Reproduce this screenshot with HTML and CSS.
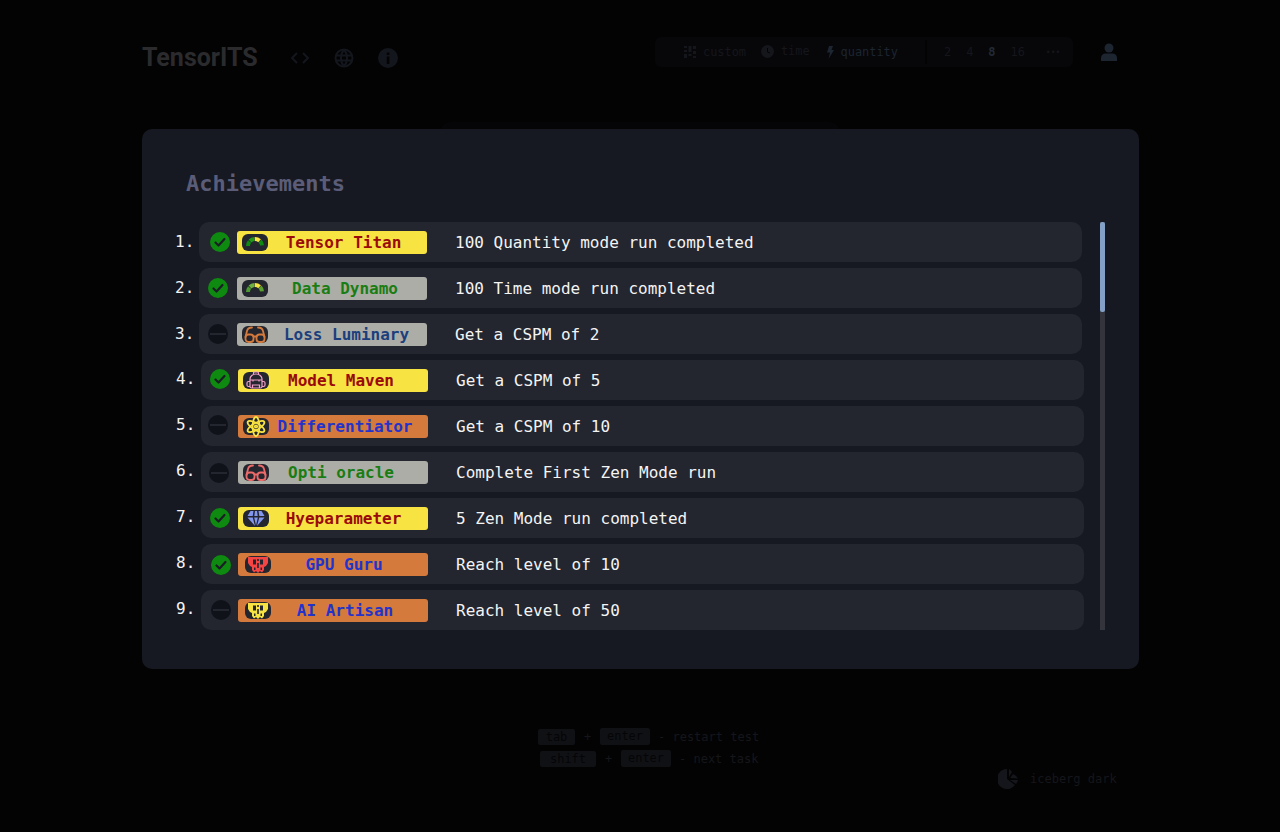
FILE: index.html
```html
<!DOCTYPE html>
<html>
  <head>
    <meta charset="UTF-8">
    <title>TensorITS</title>
    <link rel="stylesheet" href="styles.css">
  </head>
  <body>

    <svg class="defs" width="0" height="0">
      <symbol id="gauge" viewBox="0 0 26 17">
        <g fill="none" stroke-width="4" transform="translate(0 -1)">
          <path class="g1" d="M6 13A7 7 0 0 1 7.6 8.5"/>
          <path class="g2" d="M8 8A7 7 0 0 1 12.4 6"/>
          <path class="g3" d="M12.800 6A7 7 0 0 1 17.600 7.700"/>
          <path class="g4" d="M18 8A7 7 0 0 1 20 12.400"/>
        </g>
      </symbol>
      <symbol id="glasses" viewBox="0 0 26 17">
        <g fill="none" stroke="currentColor" stroke-width="1.8" stroke-linecap="round">
          <rect x="3.5" y="8.5" width="8" height="7.5" rx="3"/>
          <rect x="14.5" y="8.5" width="8" height="7.5" rx="3"/>
          <path d="M11.5 10.5h3M3.5 11L5 5C5.6 2.6 7 1.5 10 1.5M22.5 11L21 5C20.4 2.6 19 1.5 16 1.5"/>
        </g>
      </symbol>
      <symbol id="backpack" viewBox="0 0 26 17">
        <g fill="none" stroke="currentColor" stroke-width="1.2">
          <path d="M7 14.500V7a6 5 0 0 1 12 0v7.500a1.500 1.500 0 0 1-1.500 1.500h-9A1.500 1.500 0 0 1 7 14.500z"/>
          <path d="M10.500 2.500V1a1 1 0 0 1 1-1h3a1 1 0 0 1 1 1v1.500M7 8h12M10 8v1.500M16 8v1.500M9.500 16v-3h7v3M7 9.500H5.500A1.500 1.500 0 0 0 4 11v2a1.500 1.500 0 0 0 1.500 1.500H7M19 9.500h1.500A1.500 1.500 0 0 1 22 11v2a1.500 1.500 0 0 1-1.500 1.500H19"/>
        </g>
      </symbol>
      <symbol id="atom" viewBox="0 0 26 17">
        <g fill="none" stroke="currentColor" stroke-width="1.8">
          <ellipse cx="13" cy="8.5" rx="3.4" ry="9.5"/>
          <ellipse cx="13" cy="8.5" rx="3.4" ry="9.5" transform="rotate(60 13 8.5)"/>
          <ellipse cx="13" cy="8.5" rx="3.4" ry="9.5" transform="rotate(120 13 8.5)"/>
          <circle cx="13" cy="8.5" r="1.2"/>
        </g>
      </symbol>
      <symbol id="diamond" viewBox="0 0 26 17">
        <path fill="currentColor" d="M7.500 1h3l-.800 5H4.500zM12 1h2l.700 5h-3.400zM15.500 1h3l3 5h-5.200zM4.500 7.500h5.200l2.300 8.500zM11.200 7.500h3.600L13 15.500zM16.300 7.500h5.200L14 16z"/>
      </symbol>
      <symbol id="skull" viewBox="0 0 26 17">
        <path fill="currentColor" fill-rule="evenodd" d="M3 1h20v6l-2 3-2 1v3l-2 2.500-2-1.500-2 2-2-2-2 1.500L7 14v-3L5 10 3 7zM8 3.500v5h3v-5zM15 3.500v5h3v-5zM12.200 3v2h1.600V3zM12.200 7v5h1.600V7zM9 11.500V14h1.500v-2.500zM15.500 11.500V14H17v-2.500z"/>
      </symbol>
      <symbol id="tick" viewBox="0 0 20 20">
        <path fill="none" stroke="currentColor" stroke-width="2.2" stroke-linecap="round" stroke-linejoin="round" d="M5.500 10.500l3 3 6-6.500"/>
      </symbol>
    </svg>

    <div class="page">
      <header class="header">
        <div class="logo">TensorITS</div>
        <nav class="nav">
          <svg width="20" height="14" viewBox="0 0 20 14"><path fill="none" stroke="currentColor" stroke-width="2" d="M7 2L2 7l5 5M13 2l5 5-5 5"/></svg>
          <svg width="20" height="20" viewBox="0 0 20 20"><g fill="none" stroke="currentColor" stroke-width="2"><circle cx="10" cy="10" r="8.500"/><path d="M1.500 7.500h17M1.500 12.500h17M10 1.500C6 6 6 14 10 18.500M10 1.500c4 4.500 4 12.500 0 17"/></g></svg>
          <svg width="20" height="20" viewBox="0 0 20 20"><circle cx="10" cy="10" r="10" fill="currentColor"/><path fill="#030304" d="M8.800 8.500h2.600V16H8.800zM8.800 4.500h2.600v2.600H8.800z"/></svg>
        </nav>
        <div class="toolbar">
          <div class="modes">
            <span class="mode">
              <svg width="12" height="13" viewBox="0 0 12 13"><path fill="currentColor" d="M0 0h3v2H0zM0 4h3v2H0zM0 8h3v4H0zM4.500 0h3v6h-3zM4.500 8h3v2h-3zM9 0h3v3H9zM9 5h3v3H9zM9 10h3v2H9z"/></svg>
              custom
            </span>
            <span class="mode mode-time">
              <svg width="13" height="13" viewBox="0 0 13 13"><circle cx="6.500" cy="6.500" r="6.500" fill="currentColor"/><path fill="none" stroke="#030304" d="M6.500 3v4l2.500 1"/></svg>
              time
            </span>
            <span class="mode mode-active">
              <svg width="7" height="13" viewBox="0 0 7 13"><path fill="currentColor" d="M2 0h4L4.500 4H7L1.500 13 3 6.500H0z"/></svg>
              quantity
            </span>
          </div>
          <div class="counts">
            <span>2</span>
            <span>4</span>
            <span class="count-active">8</span>
            <span>16</span>
            <span class="count-more">•••</span>
          </div>
        </div>
        <svg class="user" width="16" height="18" viewBox="0 0 16 18"><circle cx="8" cy="5" r="4.500" fill="currentColor"/><path fill="currentColor" d="M0 18v-3c0-3 2-4.500 4.500-4.500h7C14 10.500 16 12 16 15v3z"/></svg>
      </header>

      <div class="task-box"></div>

      <footer class="footer">
        <div class="hints">
          <div class="hint"><kbd>tab</kbd><i>+</i><kbd class="kbd-enter">enter</kbd><span>- restart test</span></div>
          <div class="hint hint-second"><kbd class="kbd-shift">shift</kbd><i>+</i><kbd class="kbd-enter">enter</kbd><span>- next task</span></div>
        </div>
        <div class="theme">
          <svg width="20" height="20" viewBox="0 0 20 20"><path fill="currentColor" d="M9 0a10 10 0 1 0 8 16l-8-6zM11 0v8l3-5a10 10 0 0 0-3-3zM15 5l-3 4 8 .500A10 10 0 0 0 15 5zM12 11l6 4a10 10 0 0 0 2-4z"/></svg>
          iceberg dark
        </div>
      </footer>
    </div>

    <div class="overlay">
      <section class="modal">
        <h2 class="modal-title">Achievements</h2>
        <div class="modal-body">
          <ol class="list">
            <li class="item">
              <span class="num">1.</span>
              <div class="row">
                <span class="status done"><svg width="20" height="20"><use href="#tick"/></svg></span>
                <span class="badge gold"><svg class="icon gauge-bright"><use href="#gauge"/></svg><b>Tensor Titan</b></span>
                <span class="desc">100 Quantity mode run completed</span>
              </div>
            </li>
            <li class="item">
              <span class="num">2.</span>
              <div class="row">
                <span class="status done"><svg width="20" height="20"><use href="#tick"/></svg></span>
                <span class="badge silver"><svg class="icon gauge-soft"><use href="#gauge"/></svg><b class="green">Data Dynamo</b></span>
                <span class="desc">100 Time mode run completed</span>
              </div>
            </li>
            <li class="item">
              <span class="num">3.</span>
              <div class="row">
                <span class="status"></span>
                <span class="badge silver"><svg class="icon orange"><use href="#glasses"/></svg><b class="navy">Loss Luminary</b></span>
                <span class="desc">Get a CSPM of 2</span>
              </div>
            </li>
            <li class="item">
              <span class="num">4.</span>
              <div class="row">
                <span class="status done"><svg width="20" height="20"><use href="#tick"/></svg></span>
                <span class="badge gold"><svg class="icon pink"><use href="#backpack"/></svg><b>Model Maven</b></span>
                <span class="desc">Get a CSPM of 5</span>
              </div>
            </li>
            <li class="item">
              <span class="num">5.</span>
              <div class="row">
                <span class="status"></span>
                <span class="badge bronze"><svg class="icon yellow"><use href="#atom"/></svg><b class="blue">Differentiator</b></span>
                <span class="desc">Get a CSPM of 10</span>
              </div>
            </li>
            <li class="item">
              <span class="num">6.</span>
              <div class="row">
                <span class="status"></span>
                <span class="badge silver"><svg class="icon coral"><use href="#glasses"/></svg><b class="green">Opti oracle</b></span>
                <span class="desc">Complete First Zen Mode run</span>
              </div>
            </li>
            <li class="item">
              <span class="num">7.</span>
              <div class="row">
                <span class="status done"><svg width="20" height="20"><use href="#tick"/></svg></span>
                <span class="badge gold"><svg class="icon periwinkle"><use href="#diamond"/></svg><b>Hyeparameter</b></span>
                <span class="desc">5 Zen Mode run completed</span>
              </div>
            </li>
            <li class="item">
              <span class="num">8.</span>
              <div class="row">
                <span class="status done"><svg width="20" height="20"><use href="#tick"/></svg></span>
                <span class="badge bronze"><svg class="icon red skull"><use href="#skull"/></svg><b class="blue">GPU Guru</b></span>
                <span class="desc">Reach level of 10</span>
              </div>
            </li>
            <li class="item">
              <span class="num">9.</span>
              <div class="row">
                <span class="status"></span>
                <span class="badge bronze"><svg class="icon yellow skull"><use href="#skull"/></svg><b class="blue">AI Artisan</b></span>
                <span class="desc">Reach level of 50</span>
              </div>
            </li>
          </ol>
          <div class="scrollbar"><div class="scrollbar-thumb"></div></div>
        </div>
      </section>
    </div>

  </body>
</html>
```

FILE: styles.css
```css
* {
  box-sizing: border-box;
  margin: 0;
  padding: 0;
}

html, body {
  height: 100%;
}

body {
  background: #030304;
  font-family: "DejaVu Sans Mono", "Liberation Mono", monospace;
  overflow: hidden;
}

.defs { display: block; }
symbol { overflow: visible; }

/* page behind the dialog, already dimmed */
.page {
  height: 832px;
  padding: 0 141px 0 142px;
  color: #15161b;
}

.header {
  display: flex;
  align-items: flex-start;
  padding-top: 37px;
  height: 85px;
}

.logo {
  font-family: Roboto, sans-serif;
  font-weight: 700;
  font-size: 25px;
  line-height: 30px;
  margin-top: 6px;
  width: 115px;
  color: #2b2b2d;
}

.nav {
  display: flex;
  align-items: center;
  gap: 24px;
  margin: 11px 0 0 33px;
  color: #14161d;
}

.toolbar {
  display: flex;
  align-items: center;
  width: 418px;
  height: 30px;
  margin-left: 257px;
  border-radius: 6px;
  background: #07070a;
  font-size: 11.9px;
}

.modes {
  display: flex;
  width: 272px;
  height: 24px;
  padding-left: 29px;
  gap: 15px;
  align-items: center;
  border-right: 2px solid #030304;
}

.mode {
  display: flex;
  align-items: center;
  gap: 7px;
}

.mode-time { margin-bottom: 2px; }
.mode-active { color: #1c2530; margin-left: 2px; }

.counts {
  display: flex;
  gap: 15px;
  padding-left: 17px;
}

.count-active { color: #222a35; font-weight: 700; }
.count-more { margin-left: 6px; font-size: 8px; line-height: 15px; }

.user {
  margin: 6px 0 0 28px;
  color: #1c2530;
}

.task-box {
  width: 400px;
  height: 100px;
  margin: 37px 0 0 298px;
  border-radius: 10px;
  background: #050507;
}

.footer {
  display: flex;
  flex-direction: column;
  margin-top: 506px;
  font-size: 12px;
}

.hints {
  display: flex;
  flex-direction: column;
  gap: 5px;
  width: 240px;
  margin-left: 396px;
}

.hint {
  display: flex;
  align-items: center;
  height: 17px;
}

.hint-second { margin-left: 2px; }
.hint i { font-style: normal; width: 25px; text-align: center; }
.hint span { margin-left: 8px; }

kbd {
  font: inherit;
  width: 37px;
  height: 16px;
  line-height: 16px;
  text-align: center;
  border-radius: 2px;
  color: #050507;
  background: #101115;
}

kbd.kbd-enter { width: 50px; height: 17px; }
kbd.kbd-shift { width: 56px; }

.theme {
  display: flex;
  align-items: center;
  gap: 12px;
  margin: 2px 0 0 856px;
}

/* dialog */
.overlay {
  position: fixed;
  top: 0;
  left: 0;
  width: 100%;
  height: 100%;
  padding: 129px 141px 0 142px;
}

.modal {
  height: 540px;
  padding: 42px 34px 0 32px;
  border-radius: 10px;
  background: #161922;
}

.modal-title {
  margin-left: 12px;
  font-size: 22px;
  line-height: 26px;
  font-weight: 700;
  color: #5b5d78;
}

.modal-body {
  display: flex;
  justify-content: space-between;
  margin-top: 25px;
}

.list {
  list-style: none;
  display: flex;
  flex-direction: column;
  gap: 6px;
}

.item {
  display: flex;
  align-items: center;
  color: #f4f4f4;
  font-size: 16px;
}

.num {
  flex: none;
  width: 25px;
  padding-left: 1px;
  margin-bottom: 2px;
}

.item:nth-child(n+4) .num { width: 27px; padding-left: 2px; margin-bottom: 4px; }

.row {
  display: flex;
  align-items: center;
  flex: none;
  width: 883px;
  height: 40px;
  padding-left: 9px;
  border-radius: 10px;
  background: #23252f;
}

.status {
  display: flex;
  align-items: center;
  justify-content: center;
  flex: none;
  width: 20px;
  height: 20px;
  margin-right: 9px;
  border-radius: 50%;
  background: #10121a;
  color: #1b1d26;
}

.status:empty::after {
  content: "";
  width: 16px;
  height: 2px;
  background: #23252f;
}

.status.done { background: #0e8a10; }
.status svg { display: block; }

.item:nth-child(1) .status { margin-left: 2px; margin-right: 7px; }
.item:nth-child(4) .status { margin-right: 8px; margin-top: -2px; }
.item:nth-child(5) .status { margin-left: -2px; margin-right: 10px; margin-top: -2px; }
.item:nth-child(6) .status { margin-left: -1px; margin-right: 9px; margin-top: 2px; }
.item:nth-child(7) .status { margin-right: 8px; }
.item:nth-child(8) .status { margin-left: 1px; margin-right: 7px; margin-top: 2px; }
.item:nth-child(9) .status { margin-left: 1px; margin-right: 7px; }

.badge {
  display: flex;
  align-items: center;
  flex: none;
  width: 190px;
  height: 23px;
  margin-top: 1px;
  padding-left: 5px;
  border-radius: 3px;
}

.badge b {
  flex: 1;
  padding-right: 5px;
  text-align: center;
  font-size: 16px;
  color: #9b0a0a;
}

/* labels don't sit quite centred in the badge */
.item:nth-child(1) .badge b { padding-right: 8px; }
.item:nth-child(3) .badge b { padding-right: 2px; }
.item:nth-child(4) .badge b { padding-right: 15px; }
.item:nth-child(5) .badge b { padding-right: 7px; }
.item:nth-child(6) .badge b { padding-right: 15px; }
.item:nth-child(7) .badge b { padding-right: 10px; }
.item:nth-child(8) .badge b { padding-right: 9px; }
.item:nth-child(9) .badge b { padding-right: 7px; }

.gold { background: #f7e341; }
.silver { background: #acada6; }
.bronze { background: #d47a3c; }

.badge b.green { color: #1a7d14; }
.badge b.navy { color: #1b3f7d; }
.badge b.blue { color: #2233cc; }

.icon {
  display: block;
  flex: none;
  width: 26px;
  height: 17px;
  overflow: visible;
  border-radius: 6px;
  background: #23252f;
}

.icon.skull { margin-left: 2px; margin-right: -2px; }

.orange { color: #d47a3c; }
.pink { color: #f4a0c8; }
.yellow { color: #f7e341; }
.coral { color: #ec6a6a; }
.periwinkle { color: #8296ee; }
.red { color: #f54444; }

.g1 { stroke: var(--g1); }
.g2 { stroke: var(--g2); }
.g3 { stroke: #f7e341; }
.g4 { stroke: var(--g4); }

.gauge-bright { --g1: #0e8a10; --g2: #1e9a18; --g4: #0e8a10; }
.gauge-soft { --g1: #4e9a30; --g2: #6fb040; --g4: #5aa030; }

.desc {
  margin-left: 28px;
  white-space: pre;
}

.scrollbar {
  flex: none;
  width: 5px;
  height: 408px;
  background: #33343c;
}

.scrollbar-thumb {
  height: 90px;
  border-radius: 2px;
  background: #84a0c6;
}
```
